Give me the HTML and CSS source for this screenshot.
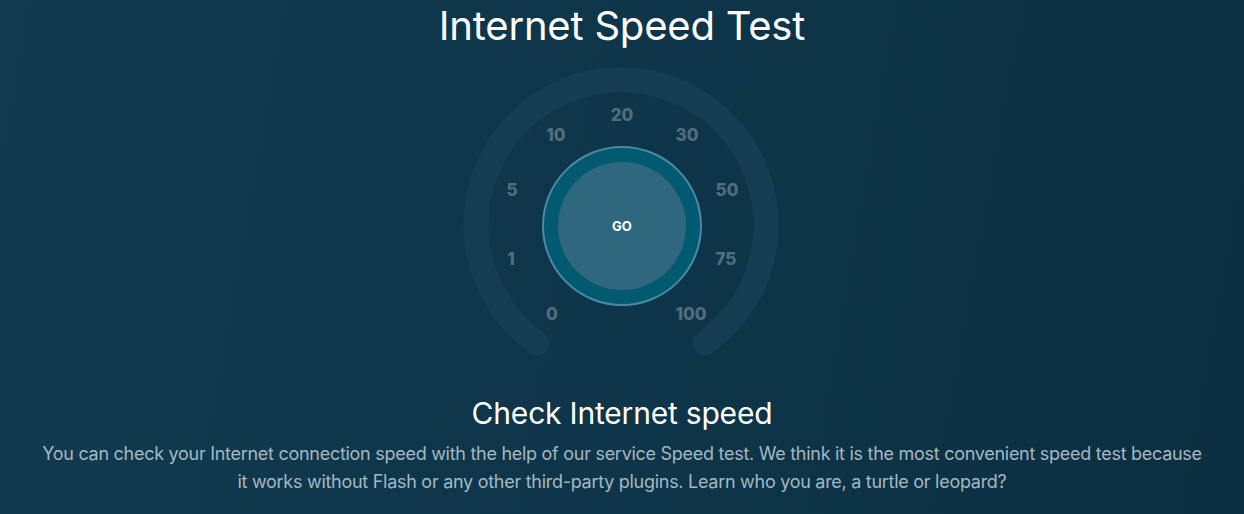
FILE: index.html
```html
<!DOCTYPE html>
<html lang="en">
<head>
  <meta charset="UTF-8">
  <meta name="viewport" content="width=device-width, initial-scale=1.0">
  <title>Internet Speed Test</title>
  <link rel="stylesheet" href="styles.css">
</head>
<body>
  <main class="speed-page">
    <h1 class="page-title">Internet Speed Test</h1>

    <!-- Gauge -->
    <div class="gauge">
      <svg class="gauge-scale" width="320" height="300" viewBox="0 0 320 300">
        <path d="M 76 283 A 145 145 0 1 1 244 283" fill="none" stroke="#163d52" stroke-width="25" stroke-linecap="round"/>
        <g class="gauge-labels">
          <text x="91" y="254">0</text>
          <text x="50" y="199">1</text>
          <text x="51" y="130">5</text>
          <text x="95" y="75">10</text>
          <text x="161" y="55">20</text>
          <text x="226" y="75">30</text>
          <text x="266" y="130">50</text>
          <text x="265" y="199">75</text>
          <text x="230" y="254">100</text>
        </g>
      </svg>
      <button class="go-button" id="goButton"><span>GO</span></button>
    </div>

    <section class="about">
      <h2>Check Internet speed</h2>
      <p>You can check your Internet connection speed with the help of our service Speed test. We think it is the most convenient speed test because it works without Flash or any other third-party plugins. Learn who you are, a turtle or leopard?</p>
    </section>
  </main>
</body>
</html>
```
FILE: styles.css
```css
body {
  margin: 0;
  height: 100vh;
  font-family: Inter, "Open Sans", sans-serif;
  background: linear-gradient(100deg, #103b50 0%, #0e3549 50%, #0b2f41 100%);
  color: #ffffff;
  overflow: hidden;
}

.speed-page {
  display: flex;
  flex-direction: column;
  align-items: center;
}

.page-title {
  margin: 0;
  font-size: 40px;
  font-weight: 400;
  line-height: 52px;
  letter-spacing: -0.2px;
}

.gauge {
  position: relative;
  width: 320px;
  height: 300px;
  margin-top: 8px;
  margin-left: -2px;
}

.gauge-scale {
  display: block;
}

.gauge-labels text {
  fill: #526e7c;
  font-family: Inter, "Open Sans", sans-serif;
  font-size: 17px;
  font-weight: 800;
  text-anchor: middle;
  dominant-baseline: central;
}

.go-button {
  position: absolute;
  left: 81px;
  top: 86px;
  width: 160px;
  height: 160px;
  padding: 14px;
  border: 2px solid #4a8aa6;
  border-radius: 50%;
  background: #015a70;
  cursor: pointer;
  box-sizing: border-box;
}

.go-button span {
  display: flex;
  align-items: center;
  justify-content: center;
  width: 100%;
  height: 100%;
  border-radius: 50%;
  background: #2e677e;
  color: #ffffff;
  font-family: Inter, "Open Sans", sans-serif;
  font-size: 13px;
  font-weight: 700;
}

.about {
  margin-top: 34px;
  text-align: center;
  max-width: 1166px;
}

.about h2 {
  margin: 0 0 8px;
  font-size: 30px;
  font-weight: 400;
  line-height: 38px;
  letter-spacing: -0.2px;
}

.about p {
  margin: 0;
  font-size: 18px;
  line-height: 28px;
  color: #a5b8c2;
  letter-spacing: -0.28px;
}
```
